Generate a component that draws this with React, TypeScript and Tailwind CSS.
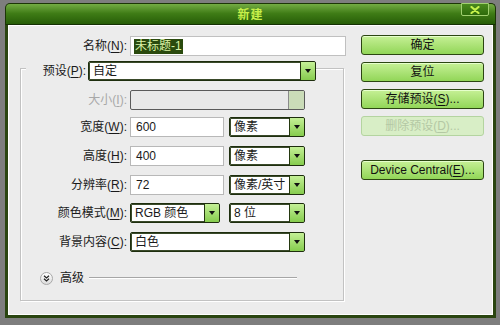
import React from "react";

const Acc = ({ k }: { k: string }) => (
  <>
    (<span className="underline underline-offset-2">{k}</span>):
  </>
);

const Arrow = () => (
  <div className="w-[15px] h-full border-l border-[#24380f] bg-[linear-gradient(to_bottom,#c4f096,#86cc4e)] flex items-center justify-center shrink-0">
    <div className="w-0 h-0 border-x-[3px] border-x-transparent border-t-[4px] border-t-[#111]" />
  </div>
);

const Select = ({ w, text }: { w: string; text: string }) => (
  <div className={`${w} h-[20px] bg-white border border-[#1e2e0e] rounded-[2px] flex items-stretch overflow-hidden shadow-[inset_0_0_0_1px_#3a4a2a]`}>
    <div className="flex-1 pl-[4px] flex items-center text-[12px] text-[#1a1a1a] whitespace-nowrap overflow-hidden">{text}</div>
    <Arrow />
  </div>
);

const Input = ({ text }: { text: string }) => (
  <div className="w-[94px] h-[20px] bg-white border border-[#b8b8b8] pl-[5px] flex items-center text-[12px] text-[#1a1a1a]">
    {text}
  </div>
);

const Btn = ({ children, disabled, mt }: { children: React.ReactNode; disabled?: boolean; mt: string }) => (
  <div
    className={`${mt} h-[20px] w-[123px] rounded-[3px] border flex items-center justify-center text-[12px] whitespace-nowrap ${
      disabled
        ? "border-[#b4d4a0] bg-[#d8eec6] text-[#b4c8a4]"
        : "border-[#2c4612] bg-[linear-gradient(to_bottom,#c6f096,#92d658)] text-[#111] shadow-[inset_0_1px_0_#e6ffcc]"
    }`}
  >
    {children}
  </div>
);

export default function App() {
  return (
    <div className="w-[500px] h-[325px] bg-[#7e7e7e] pt-[3px] pl-[5px] overflow-hidden font-['Liberation_Sans','Noto_Sans_CJK_SC',sans-serif]">
      <div className="w-[491px] h-[315px] flex flex-col relative">
        {/* title bar */}
        <div className="h-[22px] rounded-t-[5px] border border-b-0 border-[#1c3606] bg-[linear-gradient(to_bottom,#74ac44,#3f7c16_45%,#245a06)] flex items-center justify-center shadow-[inset_0_-1px_0_#153004]">
          <span className="text-[12px] text-[#c8f04a] font-bold tracking-[1px]">新建</span>
        </div>
        <div className="absolute right-[7px] top-0 w-[28px] h-[13px] rounded-b-[2px] border border-[#a0d070] bg-[linear-gradient(to_bottom,#4a8a1e,#2d6a0a)] flex items-center justify-center">
          <svg width="10" height="8" viewBox="0 0 10 8">
            <path d="M1.5 1 L8.5 7 M8.5 1 L1.5 7" stroke="#c6f24a" strokeWidth="2.2" strokeLinecap="round" />
          </svg>
        </div>
        {/* body */}
        <div className="flex-1 bg-[#ececec] border-x-[3px] border-b-[3px] border-[#2a4510] shadow-[inset_1px_1px_0_#ffffff,inset_-1px_-1px_0_#ffffff] flex">
          {/* left column */}
          <div className="w-[353px] flex flex-col text-[12px] text-[#1a1a1a]">
            <div className="mt-[11px] h-[20px] flex items-center">
              <div className="w-[119px] text-right">
                名称<Acc k="N" />
              </div>
              <div className="ml-[3px] w-[216px] h-[20px] bg-white border border-[#c0c0c0] flex items-center pl-[3px]">
                <span className="bg-[#2a4a0e] text-[#dcf4a8] px-[1px] leading-[15px]">未标题-1</span>
              </div>
            </div>
            {/* group box */}
            <div className="mt-[12px] ml-[12px] w-[324px] h-[233px] border border-[#c2c2c2] shadow-[inset_1px_1px_0_#fff,1px_1px_0_#fff] flex flex-col">
              <div className="-mt-[8px] h-[20px] flex items-center">
                <div className="ml-[5px] w-[62px] pr-[2px] text-right bg-[#ececec] h-full flex items-center justify-end">
                  预设<Acc k="P" />
                </div>
                <Select w="w-[228px]" text="自定" />
              </div>
              <div className="mt-[9px] h-[20px] flex items-center">
                <div className="w-[106px] text-right text-[#a8a8a8]">
                  大小<Acc k="I" />
                </div>
                <div className="ml-[3px] w-[175px] h-[20px] border border-[#5a5a5a] rounded-[2px] bg-[#e8e8e8] flex justify-end overflow-hidden">
                  <div className="w-[16px] h-full border-l border-[#8a8a8a] bg-[#cadcb8]" />
                </div>
              </div>
              {[
                { l: "宽度", k: "W", v: "600", u: "像素", mt: "mt-[7px]" },
                { l: "高度", k: "H", v: "400", u: "像素", mt: "mt-[9px]" },
                { l: "分辨率", k: "R", v: "72", u: "像素/英寸", mt: "mt-[9px]" },
              ].map((r) => (
                <div key={r.k} className={`${r.mt} h-[20px] flex items-center`}>
                  <div className="w-[106px] text-right">
                    {r.l}
                    <Acc k={r.k} />
                  </div>
                  <div className="ml-[3px]">
                    <Input text={r.v} />
                  </div>
                  <div className="ml-[5px]">
                    <Select w="w-[76px]" text={r.u} />
                  </div>
                </div>
              ))}
              <div className="mt-[8px] h-[20px] flex items-center">
                <div className="w-[106px] text-right">
                  颜色模式<Acc k="M" />
                </div>
                <div className="ml-[3px]">
                  <Select w="w-[90px]" text="RGB 颜色" />
                </div>
                <div className="ml-[9px]">
                  <Select w="w-[76px]" text="8 位" />
                </div>
              </div>
              <div className="mt-[9px] h-[20px] flex items-center">
                <div className="w-[106px] text-right">
                  背景内容<Acc k="C" />
                </div>
                <div className="ml-[3px]">
                  <Select w="w-[175px]" text="白色" />
                </div>
              </div>
              <div className="mt-[16px] h-[20px] flex items-center">
                <div className="ml-[19px] w-[13px] h-[13px] rounded-full border border-[#a8a8a8] bg-[linear-gradient(to_bottom,#ffffff,#dcdcdc)] flex items-center justify-center">
                  <svg width="7" height="7" viewBox="0 0 7 7">
                    <path d="M1 0.8 L3.5 3 L6 0.8 M1 3.8 L3.5 6 L6 3.8" stroke="#222" strokeWidth="1.2" fill="none" />
                  </svg>
                </div>
                <span className="ml-[7px]">高级</span>
                <div className="ml-[5px] w-[208px] h-[2px] border-t border-[#a6a6a6] border-b border-b-white" />
              </div>
            </div>
          </div>
          {/* right column */}
          <div className="flex flex-col">
            <Btn mt="mt-[10px]">确定</Btn>
            <Btn mt="mt-[7px]">复位</Btn>
            <Btn mt="mt-[7px]">
              存储预设(<span className="underline underline-offset-2">S</span>)...
            </Btn>
            <Btn mt="mt-[7px]" disabled>
              删除预设(<span className="underline underline-offset-2">D</span>)...
            </Btn>
            <Btn mt="mt-[24px]">
              Device Central(<span className="underline underline-offset-2">E</span>)...
            </Btn>
          </div>
        </div>
      </div>
    </div>
  );
}
